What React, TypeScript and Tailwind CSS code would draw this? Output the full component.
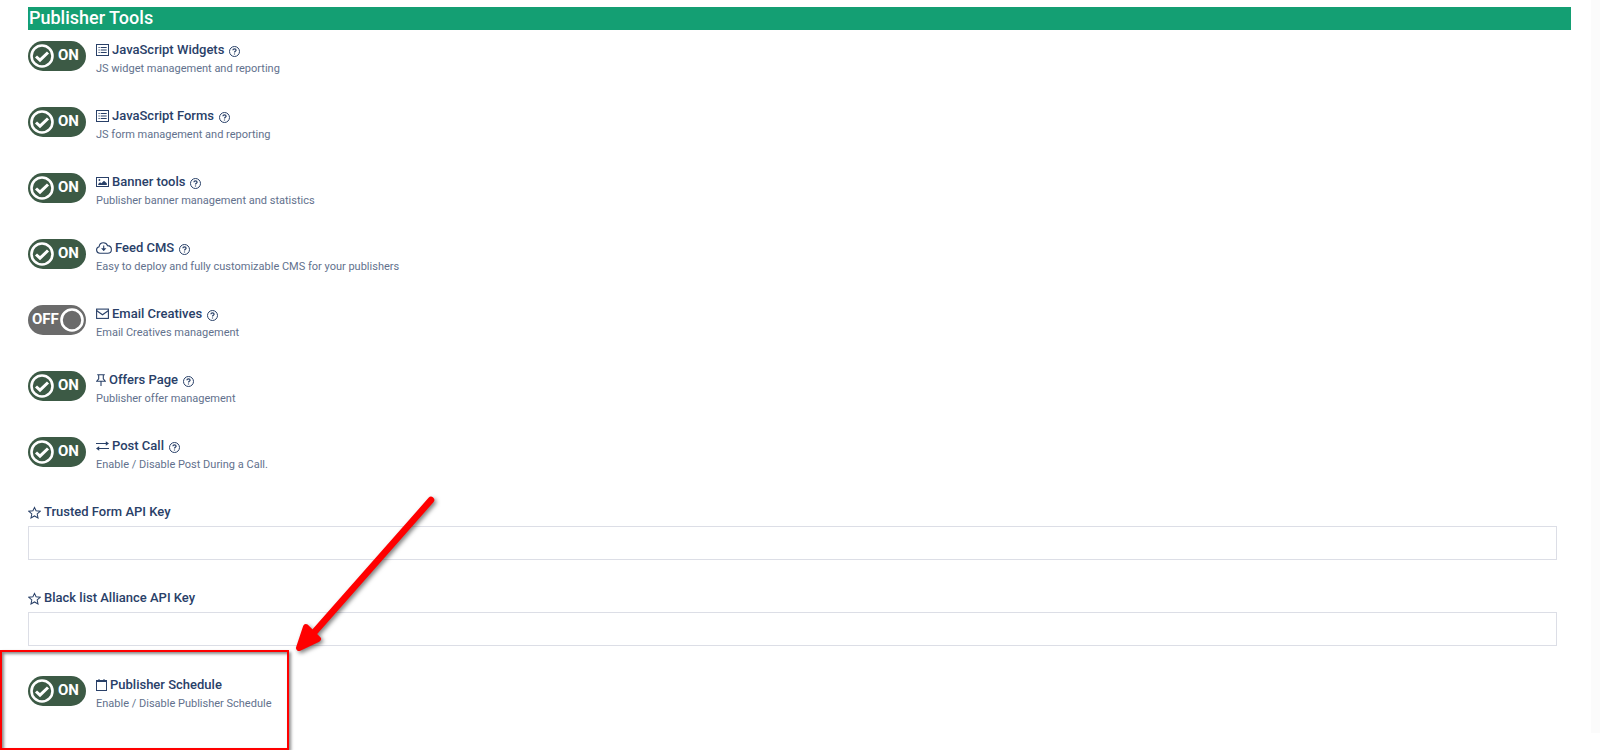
import React, { useState } from 'react';

const stroke = {
  fill: 'none',
  stroke: 'currentColor',
  strokeWidth: 1.1,
} as const;

function ListIcon() {
  return (
    <svg className="w-[13px] h-3 shrink-0" viewBox="0 0 13 12" {...stroke} strokeWidth="1">
      <rect x="0.5" y="0.5" width="12" height="11" />
      <path d="M2.5 3.5h1.200M2.500 6h1.200M2.500 8.500h1.200M4.700 3.500h6M4.700 6h6M4.700 8.500h6" />
    </svg>
  );
}

function ImageIcon() {
  return (
    <svg className="w-[13px] h-3 shrink-0" viewBox="0 0 13 12" {...stroke} strokeWidth="1">
      <rect x="0.5" y="1.5" width="12" height="9" />
      <path d="M2.200 9V7.900l1.800-1.700 1.400 1.100 2.600-2.500 2.800 2.500V9z" fill="currentColor" stroke="none" />
      <circle cx="3.400" cy="4" r="0.9" fill="currentColor" stroke="none" />
    </svg>
  );
}

function CloudIcon() {
  return (
    <svg className="w-4 h-3 shrink-0" viewBox="0 0 16 12" {...stroke}>
      <path d="M4 11.200a3.300 3.300 0 0 1-.9-6.500C3.400 2.200 5.100.7 7.400.7c2 0 3.500 1 4.100 2.900 2.300.1 3.900 1.700 3.900 3.800 0 2.200-1.600 3.800-3.800 3.800z" />
      <path d="M7.700 3.600v5" />
      <path d="M5 6.300h5.400L7.700 9z" fill="currentColor" stroke="none" />
    </svg>
  );
}

function MailIcon() {
  return (
    <svg className="w-[13px] h-3 shrink-0" viewBox="0 0 13 12" {...stroke}>
      <rect x="0.6" y="1.100" width="11.800" height="9.300" />
      <path d="M.8 2.700l5.700 4.100 5.700-4.100" />
    </svg>
  );
}

function PinIcon() {
  return (
    <svg className="w-[10px] h-3 shrink-0" viewBox="0 0 10 12" {...stroke}>
      <path d="M1.200.7h7.600M2.700.7v4.200L.8 7.200h8.400L7.300 4.900V.7M5 7.200V12" />
    </svg>
  );
}

function ExchangeIcon() {
  return (
    <svg className="w-[13px] h-3 shrink-0" viewBox="0 0 13 12" {...stroke}>
      <path d="M0 3.500h12M1 8.500h12" />
      <path d="M9.800 1.200L13 3.500 9.800 5.800zM3.200 6.200L0 8.500l3.200 2.300z" fill="currentColor" stroke="none" />
    </svg>
  );
}

function CalendarIcon() {
  return (
    <svg className="w-[11px] h-3 shrink-0" viewBox="0 0 11 12" {...stroke} strokeWidth="1">
      <rect x="0.5" y="1.500" width="10" height="10" />
      <path d="M.5 2.500h10M3 0v2.500M8 0v2.500" />
    </svg>
  );
}

function StarIcon() {
  return (
    <svg className="w-[13px] h-[13px] shrink-0" viewBox="0 0 14 13" {...stroke}>
      <path d="M7 1l1.700 3.700 4.400.5-3.200 2.900.9 4.200L7 10.200l-3.800 2.100.9-4.200L.9 5.200l4.400-.5z" />
    </svg>
  );
}

function HelpIcon() {
  return (
    <svg className="w-[11px] h-[11px]" viewBox="0 0 11 11" {...stroke} strokeWidth="1">
      <circle cx="5.500" cy="5.500" r="5" />
      <path d="M3.900 4.300c0-1 .7-1.500 1.600-1.500s1.600.6 1.600 1.400c0 1.100-1.600 1.200-1.600 2.300M5.500 7.400v1.100" strokeWidth="1.200" />
    </svg>
  );
}

const tools = [
  { id: 'widgets', title: 'JavaScript Widgets', text: 'JS widget management and reporting', icon: ListIcon, on: true },
  { id: 'forms', title: 'JavaScript Forms', text: 'JS form management and reporting', icon: ListIcon, on: true },
  { id: 'banners', title: 'Banner tools', text: 'Publisher banner management and statistics', icon: ImageIcon, on: true },
  { id: 'feed', title: 'Feed CMS', text: 'Easy to deploy and fully customizable CMS for your publishers', icon: CloudIcon, on: true },
  { id: 'email', title: 'Email Creatives', text: 'Email Creatives management', icon: MailIcon, on: false },
  { id: 'offers', title: 'Offers Page', text: 'Publisher offer management', icon: PinIcon, on: true },
  { id: 'postcall', title: 'Post Call', text: 'Enable / Disable Post During a Call.', icon: ExchangeIcon, on: true },
];

function Toggle({ id, defaultOn }: { id: string; defaultOn: boolean }) {
  const [on, setOn] = useState(defaultOn);

  return (
    <span
      className={`relative flex items-center w-[58px] h-[30px] shrink-0 rounded-full text-white text-[15px] leading-5 font-bold ${
        on ? 'bg-[#3c5a45] pl-0.5 gap-1' : 'bg-[#6b6b6b] pr-0.5 pl-1 flex-row-reverse justify-between'
      }`}
    >
      <input
        id={id}
        type="checkbox"
        checked={on}
        onChange={(e) => setOn(e.target.checked)}
        className="absolute inset-0 appearance-none rounded-full cursor-pointer"
      />
      <svg className="w-6 h-6 shrink-0" viewBox="0 0 24 24" fill="none" stroke="white">
        <circle cx="12" cy="12" r="10.500" strokeWidth="2.600" />
        {on && <path d="M6 12.500l4 3.700 8-7.700" strokeWidth="3" />}
      </svg>
      <span className="pb-0.5">{on ? 'ON' : 'OFF'}</span>
    </span>
  );
}

interface ToolRowProps {
  id: string;
  title: string;
  text: string;
  icon: React.ComponentType;
  on: boolean;
  help?: boolean;
}

function ToolRow({ id, title, text, icon: Icon, on, help = true }: ToolRowProps) {
  return (
    <div className="flex items-start gap-2.5 h-[66px]">
      <Toggle id={id} defaultOn={on} />
      <div>
        <div className="flex items-center h-[18px] text-[13px] font-medium text-[#294068]">
          <label htmlFor={id} className="flex items-center gap-[3px]">
            <Icon />
            {title}
          </label>
          {help && (
            <button type="button" aria-label={`About ${title}`} className="ml-[5px] pt-0.5">
              <HelpIcon />
            </button>
          )}
        </div>
        <p className="text-[11px] leading-5 text-[#62718d]">{text}</p>
      </div>
    </div>
  );
}

function KeyField({ id, label }: { id: string; label: string }) {
  const [value, setValue] = useState('');

  return (
    <div className="h-[86px] pr-3.5">
      <label htmlFor={id} className="flex items-center gap-[3px] h-[18px] mb-[5px] text-[13px] font-medium text-[#294068]">
        <StarIcon />
        {label}
      </label>
      <input
        id={id}
        type="text"
        value={value}
        onChange={(e) => setValue(e.target.value)}
        className="block w-full h-[34px] px-3 text-[13px] border border-[#dcdee6] bg-white focus:outline-none focus:border-[#9aa3b8]"
      />
    </div>
  );
}

// Red frame and arrow drawn over the schedule setting
function Callout() {
  return (
    <div className="absolute -left-7 -top-[26px] w-[289px] h-[100px] pointer-events-none">
      <div className="w-full h-full border-2 border-[#ff0000] shadow-[2px_2px_3px_rgba(0,0,0,0.45),inset_2px_2px_3px_rgba(0,0,0,0.45)]" />
      <svg className="absolute left-[289px] bottom-[96px] w-[150px] h-[164px] drop-shadow-[2px_2px_2px_rgba(0,0,0,0.5)]" viewBox="0 0 150 164">
        <path d="M142 10L22 146" stroke="#ff0000" strokeWidth="6.500" strokeLinecap="round" />
        <path d="M17 137L29 149L10 158z" fill="#ff0000" stroke="#ff0000" strokeWidth="6" strokeLinejoin="round" />
      </svg>
    </div>
  );
}

export default function App() {
  return (
    <div className="min-h-screen bg-white font-['Roboto',sans-serif] flex overflow-hidden">
      <main className="flex-1 min-w-0 pl-7 pr-5 pt-[7px]">
        <h2 className="h-[23px] mb-[11px] pl-px bg-[#149f73] text-white text-[18px] leading-[21px] font-medium">Publisher Tools</h2>

        {tools.map((tool) => (
          <ToolRow key={tool.id} {...tool} />
        ))}

        <KeyField id="trusted-form" label="Trusted Form API Key" />
        <KeyField id="blacklist" label="Black list Alliance API Key" />

        <div className="relative mt-px">
          <ToolRow
            id="schedule"
            title="Publisher Schedule"
            text="Enable / Disable Publisher Schedule"
            icon={CalendarIcon}
            on
            help={false}
          />
          <Callout />
        </div>
      </main>
      <div className="w-[9px] shrink-0 mb-[17px] bg-[#fbfbfb]" />
    </div>
  );
}
